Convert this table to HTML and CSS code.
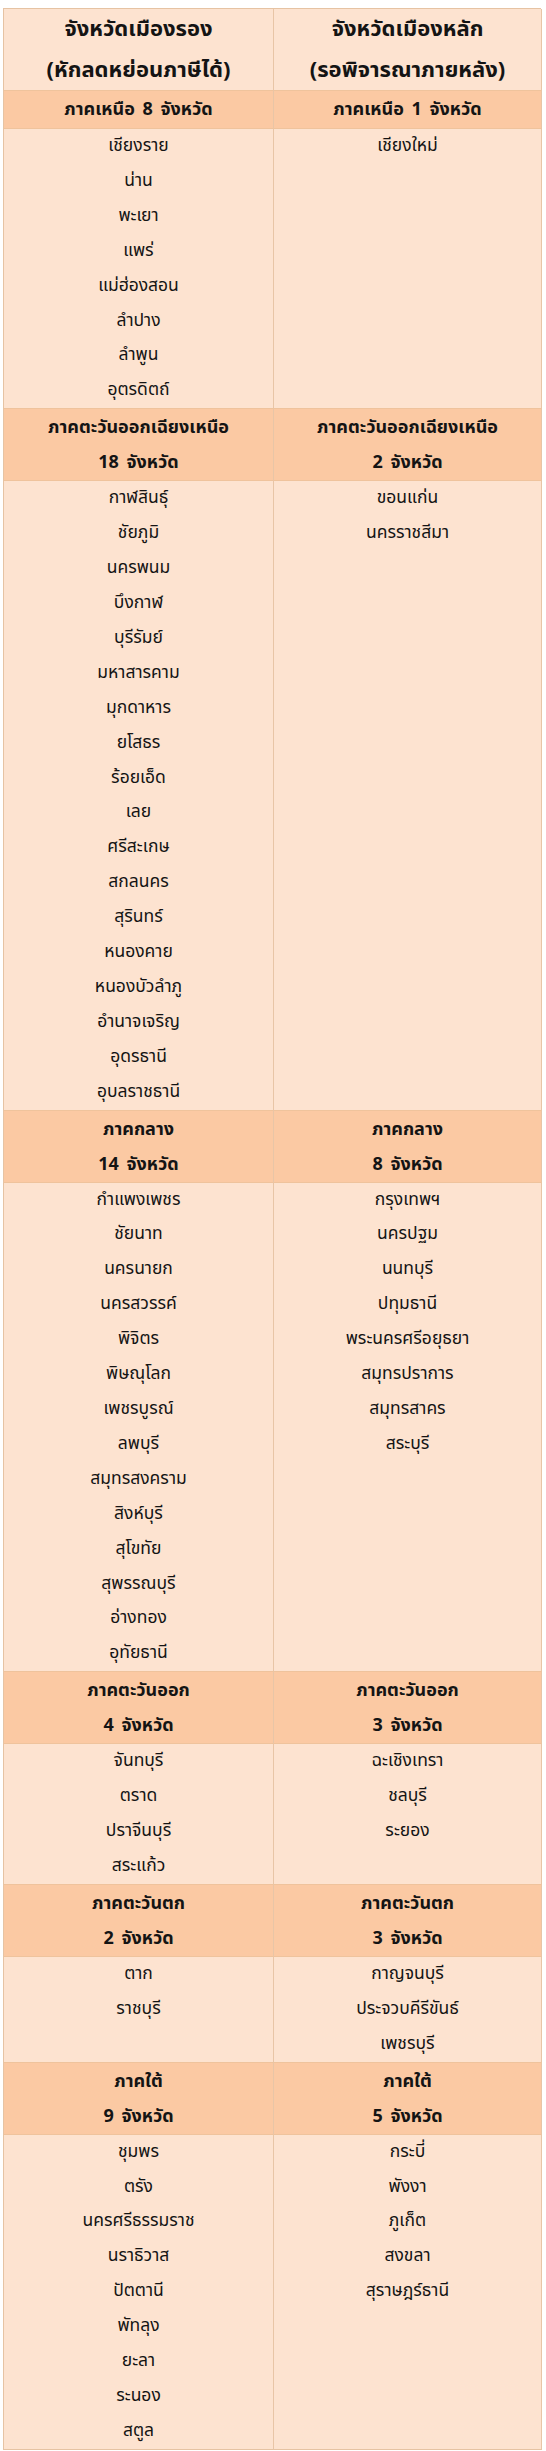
FILE: index.html
```html
<!DOCTYPE html>
<html lang="th">
<head>
<meta charset="utf-8">
<title>จังหวัดเมืองรอง / เมืองหลัก</title>
<link rel="stylesheet" href="styles.css">
</head>
<body>
<div class="table">
  <div class="cell head">จังหวัดเมืองรอง<br>(หักลดหย่อนภาษีได้)</div>
  <div class="cell head">จังหวัดเมืองหลัก<br>(รอพิจารณาภายหลัง)</div>

  <div class="cell region one">ภาคเหนือ 8 จังหวัด</div>
  <div class="cell region one">ภาคเหนือ 1 จังหวัด</div>
  <div class="cell items">เชียงราย<br>น่าน<br>พะเยา<br>แพร่<br>แม่ฮ่องสอน<br>ลำปาง<br>ลำพูน<br>อุตรดิตถ์</div>
  <div class="cell items">เชียงใหม่</div>

  <div class="cell region">ภาคตะวันออกเฉียงเหนือ<br>18 จังหวัด</div>
  <div class="cell region">ภาคตะวันออกเฉียงเหนือ<br>2 จังหวัด</div>
  <div class="cell items">กาฬสินธุ์<br>ชัยภูมิ<br>นครพนม<br>บึงกาฬ<br>บุรีรัมย์<br>มหาสารคาม<br>มุกดาหาร<br>ยโสธร<br>ร้อยเอ็ด<br>เลย<br>ศรีสะเกษ<br>สกลนคร<br>สุรินทร์<br>หนองคาย<br>หนองบัวลำภู<br>อำนาจเจริญ<br>อุดรธานี<br>อุบลราชธานี</div>
  <div class="cell items">ขอนแก่น<br>นครราชสีมา</div>

  <div class="cell region">ภาคกลาง<br>14 จังหวัด</div>
  <div class="cell region">ภาคกลาง<br>8 จังหวัด</div>
  <div class="cell items">กำแพงเพชร<br>ชัยนาท<br>นครนายก<br>นครสวรรค์<br>พิจิตร<br>พิษณุโลก<br>เพชรบูรณ์<br>ลพบุรี<br>สมุทรสงคราม<br>สิงห์บุรี<br>สุโขทัย<br>สุพรรณบุรี<br>อ่างทอง<br>อุทัยธานี</div>
  <div class="cell items">กรุงเทพฯ<br>นครปฐม<br>นนทบุรี<br>ปทุมธานี<br>พระนครศรีอยุธยา<br>สมุทรปราการ<br>สมุทรสาคร<br>สระบุรี</div>

  <div class="cell region">ภาคตะวันออก<br>4 จังหวัด</div>
  <div class="cell region">ภาคตะวันออก<br>3 จังหวัด</div>
  <div class="cell items">จันทบุรี<br>ตราด<br>ปราจีนบุรี<br>สระแก้ว</div>
  <div class="cell items">ฉะเชิงเทรา<br>ชลบุรี<br>ระยอง</div>

  <div class="cell region">ภาคตะวันตก<br>2 จังหวัด</div>
  <div class="cell region">ภาคตะวันตก<br>3 จังหวัด</div>
  <div class="cell items">ตาก<br>ราชบุรี</div>
  <div class="cell items">กาญจนบุรี<br>ประจวบคีรีขันธ์<br>เพชรบุรี</div>

  <div class="cell region">ภาคใต้<br>9 จังหวัด</div>
  <div class="cell region">ภาคใต้<br>5 จังหวัด</div>
  <div class="cell items last">ชุมพร<br>ตรัง<br>นครศรีธรรมราช<br>นราธิวาส<br>ปัตตานี<br>พัทลุง<br>ยะลา<br>ระนอง<br>สตูล</div>
  <div class="cell items last">กระบี่<br>พังงา<br>ภูเก็ต<br>สงขลา<br>สุราษฎร์ธานี</div>
</div>
</body>
</html>
```

FILE: styles.css
```css
html, body {
  margin: 0;
  padding: 0;
  background: #ffffff;
}

body {
  font-family: "Noto Sans Thai", "Noto Sans Thai Looped", "Loma", "Garuda", "Noto Sans", sans-serif;
  color: #141414;
}

.table {
  margin: 8px 0 0 3px;
  width: 538px;
  display: grid;
  grid-template-columns: 270px 268px;
  border-top: 1px solid #e6c3a3;
  border-left: 1px solid #e6c3a3;
  box-sizing: border-box;
}

.cell {
  text-align: center;
  border-right: 1px solid #e8c5a6;
  border-bottom: 1px solid #efc39c;
  box-sizing: border-box;
}

.head {
  background: #fde3d0;
  font-size: 22px;
  font-weight: 700;
  line-height: 41px;
  height: 82px;
}

.region {
  background: #fbc9a3;
  font-size: 18px;
  font-weight: 700;
  line-height: 35px;
  height: 72px;
  padding-top: 1px;
  word-spacing: 3px;
}

.region.one {
  height: 38px;
  line-height: 36px;
}

.items {
  background: #fde3d0;
  font-size: 17.5px;
  line-height: 34.9px;
}

.items.last {
  border-bottom-color: #e6c3a3;
}
```
